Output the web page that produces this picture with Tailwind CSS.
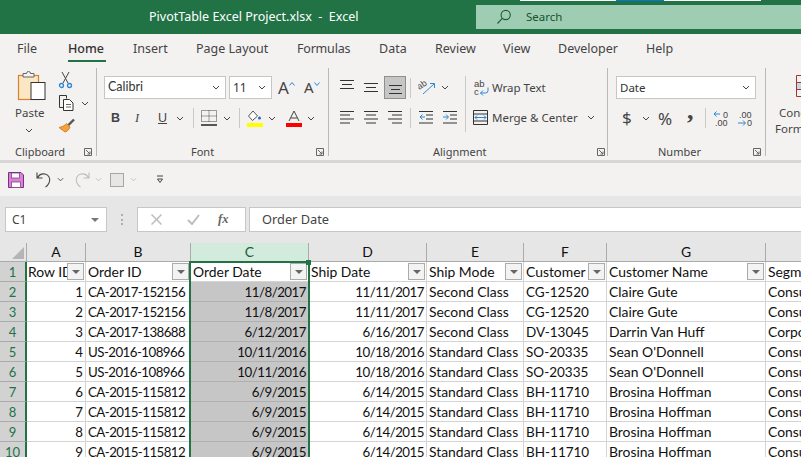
<!DOCTYPE html>
<html><head><meta charset="utf-8"><script src="https://cdn.jsdelivr.net/npm/@tailwindcss/browser@4"></script></head>
<body class="m-0">
<div class="relative w-[801px] h-[457px] overflow-hidden bg-[#e6e6e6] font-['Noto_Sans','Open_Sans',sans-serif] text-[#444]">

<!-- title bar -->
<header class="relative h-[34px] bg-[#217346] flex items-center">
  <div class="ml-[149px] w-[327px] text-[12.5px] text-white whitespace-pre">PivotTable Excel Project.xlsx  -  Excel</div>
  <div class="h-[24px] w-[325px] bg-[#9fcdb3] flex items-center text-[#14532d]">
    <svg class="ml-[20px]" width="16" height="16" viewBox="0 0 16 16" fill="none" stroke="#1d5c3a" stroke-width="1.1"><circle cx="9.7" cy="6" r="4.6"/><path d="M6.3 9.4 1.5 14.5"/></svg>
    <span class="ml-[14px] text-[11.5px]">Search</span>
  </div>
  <div class="absolute left-[520px] top-0 h-[1px] w-[96px] bg-white"></div>
  <div class="absolute left-[616px] top-0 h-[1px] w-[48px] bg-[#0078d4]"></div>
  <div class="absolute left-[664px] top-0 h-[1px] w-[97px] bg-white"></div>
</header>

<!-- tabs -->
<nav class="h-[28px] pt-[3px] bg-[#f3f2f1] flex items-center text-[12.5px] whitespace-nowrap text-[#444]">
  <span class="ml-[17px] w-[51px]">File</span>
  <span class="relative w-[65px] font-medium text-[#333]">Home<i class="absolute left-0 top-[20px] w-[38px] h-[2px] bg-[#217346]"></i></span>
  <span class="w-[63px]">Insert</span>
  <span class="w-[101px]">Page Layout</span>
  <span class="w-[82px] tracking-[-0.2px]">Formulas</span>
  <span class="w-[56px]">Data</span>
  <span class="w-[68px]">Review</span>
  <span class="w-[55px]">View</span>
  <span class="w-[88px]">Developer</span>
  <span>Help</span>
</nav>

<!-- ribbon -->
<section class="h-[98px] bg-[#f3f2f1] flex text-[#444] text-[11px] pt-[6px] pb-[4px] whitespace-nowrap">
  <!-- clipboard -->
  <div class="relative shrink-0 w-[97px] border-r border-[#b9b9b9] flex">
    <div class="w-[58px] pl-[15px] flex flex-col items-start">
      <svg class="ml-[2px] mt-[3px]" width="30" height="30" viewBox="0 0 30 30" fill="none"><rect x="1.5" y="4.5" width="20" height="24" fill="#fbe7c3" stroke="#d9812b" stroke-width="1.2"/><path d="M6 6V2.500h3.500a2 2 0 0 1 4 0H17V6z" fill="#f3f2f1" stroke="#666"/><rect x="14" y="11.500" width="14" height="17" fill="#fff" stroke="#333"/></svg>
      <span class="mt-[3px] text-[11.500px]">Paste</span>
      <svg class="ml-[10px] mt-[7px]" width="8" height="5" viewBox="0 0 8 5" fill="none" stroke="#444"><path d="m1 1 3 3 3-3"/></svg>
    </div>
    <div class="flex flex-col items-start pt-[3px]">
      <svg width="16" height="18" viewBox="0 0 16 18" fill="none" stroke="#444"><path d="M4 1l6 11M11 1 5 12"/><circle cx="3.500" cy="14.500" r="2" stroke="#2b88d8" stroke-width="1.3"/><circle cx="11.500" cy="14.500" r="2" stroke="#2b88d8" stroke-width="1.3"/></svg>
      <div class="flex items-center mt-[5px]">
        <svg width="18" height="18" viewBox="0 0 18 18" fill="none" stroke="#333"><path d="M1.500 1.500h7v3M1.500 1.500v12h4"/><path d="M5.500 5.500h6l3.500 3.500v7.500h-9.500z" fill="#fff"/><path d="M8 10.500h5M8 13h5" stroke="#666"/></svg>
        <svg class="ml-[5px]" width="8" height="5" viewBox="0 0 8 5" fill="none" stroke="#444"><path d="m1 1 3 3 3-3"/></svg>
      </div>
      <svg class="mt-[6px]" width="18" height="16" viewBox="0 0 18 16" fill="none"><path d="M1 9.500 7 14c3-1 4.500-3 5-5L8.500 5.500C7 7.500 4 9 1 9.500z" fill="#f3a33c" stroke="#d9812b"/><path d="m10.500 7 5.500-5.500" stroke="#555" stroke-width="2.400"/></svg>
    </div>
    <span class="absolute left-[15px] top-[76px]">Clipboard</span>
    <svg class="absolute left-[84px] top-[80px]" width="8" height="8" viewBox="0 0 8 8" fill="none" stroke="#666"><path d="M.5 7.500v-7h7v7zM2 2l4 4M6 3.500V6H3.500"/></svg>
  </div>

  <!-- font -->
  <div class="relative shrink-0 w-[232px] border-r border-[#b9b9b9] pl-[7px] pt-[8px]">
    <div class="flex items-center gap-[3px]">
      <div class="w-[122px] h-[23px] bg-white border border-[#c6c6c6] flex items-center justify-between px-[3px] text-[#333]"><span class="font-['Lato'] text-[12.500px]">Calibri</span><svg class="mr-[2px]" width="8" height="5" viewBox="0 0 8 5" fill="none" stroke="#444"><path d="m1 1 3 3 3-3"/></svg></div>
      <div class="w-[43px] h-[23px] bg-white border border-[#c6c6c6] flex items-center justify-between px-[3px] text-[#333]"><span class="text-[12px]">11</span><svg class="mr-[2px]" width="8" height="5" viewBox="0 0 8 5" fill="none" stroke="#444"><path d="m1 1 3 3 3-3"/></svg></div>
      <span class="ml-[3px] text-[17px] leading-none flex w-[22px]">A<svg class="mt-[3px]" width="6" height="4" viewBox="0 0 6 4" fill="none" stroke="#2b88d8"><path d="m.5 3.500 2.500-3 2.500 3"/></svg></span>
      <span class="ml-[1px] text-[15px] leading-none flex">A<svg class="mt-[2px]" width="6" height="4" viewBox="0 0 6 4" fill="none" stroke="#2b88d8"><path d="m.5.500 2.500 3 2.500-3"/></svg></span>
    </div>
    <div class="flex items-center mt-[7px] h-[24px] text-[#444]">
      <span class="ml-[7px] w-[24px] font-bold text-[12.500px] font-['Liberation_Sans']">B</span>
      <span class="w-[23px] italic text-[12.500px] font-['Liberation_Serif']">I</span>
      <span class="w-[18px] underline text-[12.500px] font-['Liberation_Sans']">U</span>
      <svg width="8" height="5" viewBox="0 0 8 5" fill="none" stroke="#444"><path d="m1 1 3 3 3-3"/></svg>
      <i class="ml-[9px] w-px h-[20px] bg-[#c9c9c9]"></i>
      <svg class="ml-[7px]" width="16" height="16" viewBox="0 0 16 16" fill="none"><path d="M.5.500h15v11H.500zM8 .500v11M.500 6h15" stroke="#444" stroke-dasharray="1 1"/><path d="M0 15h16" stroke="#222" stroke-width="1.500"/></svg>
      <svg class="ml-[6px]" width="8" height="5" viewBox="0 0 8 5" fill="none" stroke="#444"><path d="m1 1 3 3 3-3"/></svg>
      <i class="ml-[8px] w-px h-[20px] bg-[#c9c9c9]"></i>
      <svg class="ml-[7px]" width="16" height="17" viewBox="0 0 16 17" fill="none"><path d="M6 1 1.500 6l4 4.500L10.500 6z" fill="#fff" stroke="#555"/><circle cx="12.500" cy="8" r="1.500" fill="#1f6fb5"/><rect y="13" width="16" height="4" fill="#ff0"/></svg>
      <svg class="ml-[5px]" width="8" height="5" viewBox="0 0 8 5" fill="none" stroke="#444"><path d="m1 1 3 3 3-3"/></svg>
      <svg class="ml-[10px]" width="16" height="17" viewBox="0 0 16 17" fill="none"><path d="M3 11 8 1l5 10M4.800 8h6.400" stroke="#444"/><rect y="13" width="16" height="4" fill="#f00"/></svg>
      <svg class="ml-[5px]" width="8" height="5" viewBox="0 0 8 5" fill="none" stroke="#444"><path d="m1 1 3 3 3-3"/></svg>
    </div>
    <span class="absolute left-[94px] top-[76px]">Font</span>
    <svg class="absolute left-[219px] top-[80px]" width="8" height="8" viewBox="0 0 8 8" fill="none" stroke="#666"><path d="M.5 7.500v-7h7v7zM2 2l4 4M6 3.500V6H3.500"/></svg>
  </div>

  <!-- alignment -->
  <div class="relative shrink-0 w-[279px] border-r border-[#b9b9b9] flex">
    <div class="pl-[11px] pt-[8px] w-[136px] flex flex-col gap-[7px]">
      <div class="flex items-center h-[23px]">
        <svg width="15" height="23" viewBox="0 0 15 23" stroke="#333"><path d="M0 4.500h14M2 8.500h10M0 12.500h14"/></svg>
        <svg class="ml-[9px]" width="15" height="23" viewBox="0 0 15 23" stroke="#333"><path d="M0 7.500h14M2 11.500h10M0 15.500h14"/></svg>
        <div class="ml-[5px] w-[22px] h-[23px] bg-[#c6c6c6] border border-[#8f8f8f] flex items-center justify-center"><svg width="15" height="15" viewBox="0 0 15 15" stroke="#333"><path d="M1 5.500h13M3 9.500h9M1 13.500h13"/></svg></div>
        <i class="ml-[4px] w-px h-[20px] bg-[#c9c9c9]"></i>
        <svg class="ml-[7px]" width="18" height="18" viewBox="0 0 18 18" fill="none"><path d="m5 15 11-10M12 4.500h4.500V9" stroke="#2b88d8"/><text x="0" y="9" font-size="9" fill="#444" font-family="Liberation Sans" transform="rotate(-35 4 8)">ab</text></svg>
        <svg class="ml-[5px]" width="8" height="5" viewBox="0 0 8 5" fill="none" stroke="#444"><path d="m1 1 3 3 3-3"/></svg>
      </div>
      <div class="flex items-center h-[23px]">
        <svg width="15" height="15" viewBox="0 0 15 15" stroke="#333"><path d="M0 1.500h14M0 5h10M0 9h14M0 13h10"/></svg>
        <svg class="ml-[9px]" width="15" height="15" viewBox="0 0 15 15" stroke="#333"><path d="M0 1.500h14M2 5h10M0 9h14M2 13h10"/></svg>
        <svg class="ml-[9px]" width="15" height="15" viewBox="0 0 15 15" stroke="#333"><path d="M0 1.500h14M4 5h10M0 9h14M4 13h10"/></svg>
        <i class="ml-[7px] w-px h-[20px] bg-[#c9c9c9]"></i>
        <svg class="ml-[8px]" width="15" height="15" viewBox="0 0 15 15" fill="none"><path d="M0 1.500h14M7 5h7M7 9h7M0 13h14" stroke="#333"/><path d="M6 7H1M3.500 4.500 1 7l2.500 2.500" stroke="#2b88d8"/></svg>
        <svg class="ml-[9px]" width="15" height="15" viewBox="0 0 15 15" fill="none"><path d="M0 1.500h14M7 5h7M7 9h7M0 13h14" stroke="#333"/><path d="M0 7h5M3 4.500 5.500 7 3 9.500" stroke="#2b88d8"/></svg>
      </div>
    </div>
    <i class="mt-[8px] w-px h-[56px] bg-[#c9c9c9]"></i>
    <div class="pl-[8px] pt-[8px] flex flex-col gap-[7px] text-[11.500px]">
      <div class="flex items-center h-[23px]">
        <svg width="15" height="18" viewBox="0 0 15 18" fill="none"><text x="0" y="7.500" font-size="9.500" fill="#444" font-family="Liberation Sans">ab</text><text x="0" y="15.500" font-size="9.500" fill="#444" font-family="Liberation Sans">c</text><path d="M14 8.500v3a2.500 2.500 0 0 1-2.500 2.500H6.500M9 11.500 6.500 14 9 16.500" stroke="#2b88d8"/></svg>
        <span class="ml-[3px]">Wrap Text</span>
      </div>
      <div class="flex items-center h-[23px]">
        <svg class="mr-[4px] -ml-[1px]" width="15" height="15" viewBox="0 0 15 15" fill="none"><path d="M.5.500h14v14H.500z" stroke="#333"/><path d="M.500 4h14M.500 11h14" stroke="#333"/><path d="M2 7.500h11M4 5.500l-2 2 2 2M11 5.500l2 2-2 2" stroke="#2b88d8"/></svg>
        <span>Merge &amp; Center</span>
        <svg class="ml-[9px]" width="8" height="5" viewBox="0 0 8 5" fill="none" stroke="#444"><path d="m1 1 3 3 3-3"/></svg>
      </div>
    </div>
    <span class="absolute left-[104px] top-[76px]">Alignment</span>
    <svg class="absolute left-[268px] top-[80px]" width="8" height="8" viewBox="0 0 8 8" fill="none" stroke="#666"><path d="M.5 7.500v-7h7v7zM2 2l4 4M6 3.500V6H3.500"/></svg>
  </div>

  <!-- number -->
  <div class="relative shrink-0 w-[158px] border-r border-[#b9b9b9] pl-[8px] pt-[8px]">
    <div class="w-[140px] h-[23px] bg-white border border-[#c6c6c6] flex items-center justify-between px-[3px] text-[#333]"><span class="text-[11.500px]">Date</span><svg class="mr-[2px]" width="8" height="5" viewBox="0 0 8 5" fill="none" stroke="#444"><path d="m1 1 3 3 3-3"/></svg></div>
    <div class="flex items-center mt-[7px] h-[24px]">
      <span class="ml-[6px] w-[20px] text-[17px]">$</span>
      <svg width="8" height="5" viewBox="0 0 8 5" fill="none" stroke="#444"><path d="m1 1 3 3 3-3"/></svg>
      <span class="ml-[8px] w-[29px] text-[17px] leading-none">%</span>
      <span class="w-[18px] font-bold text-[26px] leading-none font-['Liberation_Serif'] -mt-[14px]">,</span>
      <i class="w-px h-[20px] bg-[#c9c9c9]"></i>
      <svg class="ml-[7px]" width="17" height="17" viewBox="0 0 17 17" fill="none"><path d="M7 4H1M3.500 1.500 1 4l2.500 2.500" stroke="#2b88d8"/><text x="10" y="7.500" font-size="9" fill="#444" font-family="Liberation Sans">0</text><text x="2" y="16" font-size="9" fill="#444" font-family="Liberation Sans">.00</text></svg>
      <svg class="ml-[7px]" width="17" height="17" viewBox="0 0 17 17" fill="none"><text x="2" y="7.500" font-size="9" fill="#444" font-family="Liberation Sans">.00</text><path d="M1 13h7M6 10.500 8.500 13 6 15.500" stroke="#2b88d8"/><text x="10" y="16" font-size="9" fill="#444" font-family="Liberation Sans">0</text></svg>
    </div>
    <span class="absolute left-[50px] top-[76px]">Number</span>
    <svg class="absolute left-[145px] top-[80px]" width="8" height="8" viewBox="0 0 8 8" fill="none" stroke="#666"><path d="M.5 7.500v-7h7v7zM2 2l4 4M6 3.500V6H3.500"/></svg>
  </div>

  <!-- styles, cut off -->
  <div class="pl-[9px] flex flex-col items-start leading-[16px] text-[11.500px]">
    <svg class="ml-[21px] mt-[7px]" width="12" height="22" viewBox="0 0 12 22" fill="none"><path d="M.5.500h12v21H.500z" stroke="#a4372a"/><path d="M.500 7.500h12M.500 14.500h12" stroke="#a4372a"/><rect x="1" y="8" width="11" height="6" fill="#bcd9f0"/></svg>
    <span class="mt-[8px] ml-[4px]">Cond</span>
    <span>Form</span>
  </div>
</section>

<!-- separator + quick access -->
<div class="h-[3px] bg-[#d6d6d6]"></div>
<div class="h-[33px] bg-[#f3f2f1] flex items-center">
  <svg class="ml-[8px]" width="16" height="16" viewBox="0 0 16 16"><path d="M.5.500h12.500l2.500 2.500v12.500H.500z" fill="#d883d4" stroke="#7a2f86"/><rect x="3.500" y="1" width="8" height="5" fill="#fff" stroke="#7a2f86" stroke-width=".7"/><rect x="3.500" y="10" width="9" height="5.500" fill="#fff" stroke="#7a2f86" stroke-width=".7"/></svg>
  <svg class="ml-[12px]" width="16" height="17" viewBox="0 0 16 17" fill="none" stroke="#444" stroke-width="1.100"><path d="M1 1.500v5.500h5.500M1.500 7C3 3.500 6 2.500 9 3c4 1 6 5 4 9-.7 1.500-2 3-3.500 4"/></svg>
  <svg class="ml-[5px]" width="7" height="5" viewBox="0 0 8 5" fill="none" stroke="#444"><path d="m1 1 3 3 3-3"/></svg>
  <svg class="ml-[10px]" width="16" height="17" viewBox="0 0 16 17" fill="none" stroke="#bdbdbd" stroke-width="1.100"><path d="M15 1.500v5.500H9.500M14.500 7C13 3.500 10 2.500 7 3c-4 1-6 5-4 9 .7 1.500 2 3 3.500 4"/></svg>
  <svg class="ml-[5px]" width="7" height="5" viewBox="0 0 8 5" fill="none" stroke="#bdbdbd"><path d="m1 1 3 3 3-3"/></svg>
  <div class="ml-[8px] w-[14px] h-[14px] bg-[#e6e6e6] border border-[#a6a6a6]"></div>
  <svg class="ml-[6px]" width="7" height="5" viewBox="0 0 8 5" fill="none" stroke="#bdbdbd"><path d="m1 1 3 3 3-3"/></svg>
  <svg class="ml-[19px]" width="8" height="9" viewBox="0 0 8 9" fill="none" stroke="#444"><path d="M1 1h6M1.500 4h5L4 7.500z"/></svg>
</div>

<!-- formula bar -->
<div class="h-[47px] flex items-center text-[#444]">
  <div class="ml-[5px] w-[102px] h-[25px] bg-white border border-[#c6c6c6] flex items-center justify-between px-[6px] text-[12px]"><span>C1</span><i class="mr-[1px] w-0 h-0 border-x-[4px] border-x-transparent border-t-[4px] border-t-[#777]"></i></div>
  <div class="ml-[14px] w-[2px] h-[11px] border-l-2 border-dotted border-[#b0b0b0]"></div>
  <div class="ml-[14px] w-[109px] h-[25px] bg-white border border-[#c6c6c6] flex items-center">
    <svg class="ml-[13px]" width="11" height="11" viewBox="0 0 11 11" stroke="#bdbdbd" stroke-width="1.500"><path d="m.5.500 10 10M10.500.500l-10 10"/></svg>
    <svg class="ml-[25px]" width="13" height="11" viewBox="0 0 13 11" fill="none" stroke="#bdbdbd" stroke-width="2"><path d="m1 6 4 4 7-9"/></svg>
    <span class="ml-[18px] font-['Liberation_Serif'] italic font-bold text-[12.500px] text-[#666]">fx</span>
  </div>
  <div class="ml-[3px] flex-1 h-[25px] bg-white border-y border-l border-[#c6c6c6] flex items-center pl-[12px] text-[12.800px] text-[#444]">Order Date</div>
</div>

<!-- sheet -->
<div class="relative font-['Lato',sans-serif] text-[13.900px] text-[#111] grid grid-cols-[27px_59px_105px_118px_118px_97px_83px_159px_60px] grid-rows-[19px_repeat(10,20px)] whitespace-nowrap [&>div]:overflow-hidden [&>div]:border-r [&>div]:border-b [&>div]:border-[#d4d4d4] [&>div]:px-[2px] [&>div]:leading-[20px]">
  <!-- header -->
  <div class="relative !border-[#ababab] bg-[#e6e6e6]"><i class="absolute right-[2px] bottom-[2px] w-0 h-0 border-l-[12px] border-l-transparent border-b-[12px] border-b-[#b5b5b5]"></i></div>
  <div class="!border-[#ababab] bg-[#e6e6e6] text-center !leading-[17px]">A</div>
  <div class="!border-[#ababab] bg-[#e6e6e6] text-center !leading-[17px]">B</div>
  <div class="!border-[#ababab] bg-[#d2ebdd] text-center text-[#1d5c3a] !leading-[17px]">C</div>
  <div class="!border-[#ababab] bg-[#e6e6e6] text-center !leading-[17px]">D</div>
  <div class="!border-[#ababab] bg-[#e6e6e6] text-center !leading-[17px]">E</div>
  <div class="!border-[#ababab] bg-[#e6e6e6] text-center !leading-[17px]">F</div>
  <div class="!border-[#ababab] bg-[#e6e6e6] text-center !leading-[17px]">G</div>
  <div class="!border-[#ababab] bg-[#e6e6e6]"></div>

  <!-- row 1 -->
  <div class="!border-[#ababab] !border-r-2 !border-r-[#217346] bg-[#d2d2d2] text-center text-[#217346] !text-[13px]">1</div>
  <div class="relative bg-white !pl-[1px]">Row ID<i class="absolute right-[1px] top-[1px] w-[17px] h-[17px] bg-[#f3f3f3] border border-[#ababab] flex items-center justify-center"><b class="w-0 h-0 border-x-[4px] border-x-transparent border-t-[4px] border-t-[#666]"></b></i></div>
  <div class="relative bg-white">Order ID<i class="absolute right-[1px] top-[1px] w-[17px] h-[17px] bg-[#f3f3f3] border border-[#ababab] flex items-center justify-center"><b class="w-0 h-0 border-x-[4px] border-x-transparent border-t-[4px] border-t-[#666]"></b></i></div>
  <div class="relative bg-white">Order Date<i class="absolute right-[1px] top-[1px] w-[17px] h-[17px] bg-[#f3f3f3] border border-[#ababab] flex items-center justify-center"><b class="w-0 h-0 border-x-[4px] border-x-transparent border-t-[4px] border-t-[#666]"></b></i></div>
  <div class="relative bg-white">Ship Date<i class="absolute right-[1px] top-[1px] w-[17px] h-[17px] bg-[#f3f3f3] border border-[#ababab] flex items-center justify-center"><b class="w-0 h-0 border-x-[4px] border-x-transparent border-t-[4px] border-t-[#666]"></b></i></div>
  <div class="relative bg-white">Ship Mode<i class="absolute right-[1px] top-[1px] w-[17px] h-[17px] bg-[#f3f3f3] border border-[#ababab] flex items-center justify-center"><b class="w-0 h-0 border-x-[4px] border-x-transparent border-t-[4px] border-t-[#666]"></b></i></div>
  <div class="relative bg-white">Customer<i class="absolute right-[1px] top-[1px] w-[17px] h-[17px] bg-[#f3f3f3] border border-[#ababab] flex items-center justify-center"><b class="w-0 h-0 border-x-[4px] border-x-transparent border-t-[4px] border-t-[#666]"></b></i></div>
  <div class="relative bg-white">Customer Name<i class="absolute right-[1px] top-[1px] w-[17px] h-[17px] bg-[#f3f3f3] border border-[#ababab] flex items-center justify-center"><b class="w-0 h-0 border-x-[4px] border-x-transparent border-t-[4px] border-t-[#666]"></b></i></div>
  <div class="bg-white">Segment</div>

  <!-- 2 -->
  <div class="!border-[#ababab] !border-r-2 !border-r-[#217346] bg-[#d2d2d2] text-center text-[#217346] !text-[13px]">2</div><div class="bg-white text-right text-[13.300px]">1</div><div class="bg-white text-[13.300px] tracking-[-0.55px]">CA-2017-152156</div><div class="bg-[#c6c6c6] text-right !border-[#b0b0b0] text-[13.300px] tracking-[-0.5px]">11/8/2017</div><div class="bg-white text-right text-[13.300px] tracking-[-0.5px]">11/11/2017</div><div class="bg-white">Second Class</div><div class="bg-white text-[13.500px]">CG-12520</div><div class="bg-white">Claire Gute</div><div class="bg-white">Consumer</div>
  <!-- 3 -->
  <div class="!border-[#ababab] !border-r-2 !border-r-[#217346] bg-[#d2d2d2] text-center text-[#217346] !text-[13px]">3</div><div class="bg-white text-right text-[13.300px]">2</div><div class="bg-white text-[13.300px] tracking-[-0.55px]">CA-2017-152156</div><div class="bg-[#c6c6c6] text-right !border-[#b0b0b0] text-[13.300px] tracking-[-0.5px]">11/8/2017</div><div class="bg-white text-right text-[13.300px] tracking-[-0.5px]">11/11/2017</div><div class="bg-white">Second Class</div><div class="bg-white text-[13.500px]">CG-12520</div><div class="bg-white">Claire Gute</div><div class="bg-white">Consumer</div>
  <!-- 4 -->
  <div class="!border-[#ababab] !border-r-2 !border-r-[#217346] bg-[#d2d2d2] text-center text-[#217346] !text-[13px]">4</div><div class="bg-white text-right text-[13.300px]">3</div><div class="bg-white text-[13.300px] tracking-[-0.55px]">CA-2017-138688</div><div class="bg-[#c6c6c6] text-right !border-[#b0b0b0] text-[13.300px] tracking-[-0.5px]">6/12/2017</div><div class="bg-white text-right text-[13.300px] tracking-[-0.5px]">6/16/2017</div><div class="bg-white">Second Class</div><div class="bg-white text-[13.500px]">DV-13045</div><div class="bg-white">Darrin Van Huff</div><div class="bg-white">Corporate</div>
  <!-- 5 -->
  <div class="!border-[#ababab] !border-r-2 !border-r-[#217346] bg-[#d2d2d2] text-center text-[#217346] !text-[13px]">5</div><div class="bg-white text-right text-[13.300px]">4</div><div class="bg-white text-[13.300px] tracking-[-0.55px]">US-2016-108966</div><div class="bg-[#c6c6c6] text-right !border-[#b0b0b0] text-[13.300px] tracking-[-0.5px]">10/11/2016</div><div class="bg-white text-right text-[13.300px] tracking-[-0.5px]">10/18/2016</div><div class="bg-white">Standard Class</div><div class="bg-white text-[13.500px]">SO-20335</div><div class="bg-white">Sean O'Donnell</div><div class="bg-white">Consumer</div>
  <!-- 6 -->
  <div class="!border-[#ababab] !border-r-2 !border-r-[#217346] bg-[#d2d2d2] text-center text-[#217346] !text-[13px]">6</div><div class="bg-white text-right text-[13.300px]">5</div><div class="bg-white text-[13.300px] tracking-[-0.55px]">US-2016-108966</div><div class="bg-[#c6c6c6] text-right !border-[#b0b0b0] text-[13.300px] tracking-[-0.5px]">10/11/2016</div><div class="bg-white text-right text-[13.300px] tracking-[-0.5px]">10/18/2016</div><div class="bg-white">Standard Class</div><div class="bg-white text-[13.500px]">SO-20335</div><div class="bg-white">Sean O'Donnell</div><div class="bg-white">Consumer</div>
  <!-- 7 -->
  <div class="!border-[#ababab] !border-r-2 !border-r-[#217346] bg-[#d2d2d2] text-center text-[#217346] !text-[13px]">7</div><div class="bg-white text-right text-[13.300px]">6</div><div class="bg-white text-[13.300px] tracking-[-0.55px]">CA-2015-115812</div><div class="bg-[#c6c6c6] text-right !border-[#b0b0b0] text-[13.300px] tracking-[-0.5px]">6/9/2015</div><div class="bg-white text-right text-[13.300px] tracking-[-0.5px]">6/14/2015</div><div class="bg-white">Standard Class</div><div class="bg-white text-[13.500px]">BH-11710</div><div class="bg-white">Brosina Hoffman</div><div class="bg-white">Consumer</div>
  <!-- 8 -->
  <div class="!border-[#ababab] !border-r-2 !border-r-[#217346] bg-[#d2d2d2] text-center text-[#217346] !text-[13px]">8</div><div class="bg-white text-right text-[13.300px]">7</div><div class="bg-white text-[13.300px] tracking-[-0.55px]">CA-2015-115812</div><div class="bg-[#c6c6c6] text-right !border-[#b0b0b0] text-[13.300px] tracking-[-0.5px]">6/9/2015</div><div class="bg-white text-right text-[13.300px] tracking-[-0.5px]">6/14/2015</div><div class="bg-white">Standard Class</div><div class="bg-white text-[13.500px]">BH-11710</div><div class="bg-white">Brosina Hoffman</div><div class="bg-white">Consumer</div>
  <!-- 9 -->
  <div class="!border-[#ababab] !border-r-2 !border-r-[#217346] bg-[#d2d2d2] text-center text-[#217346] !text-[13px]">9</div><div class="bg-white text-right text-[13.300px]">8</div><div class="bg-white text-[13.300px] tracking-[-0.55px]">CA-2015-115812</div><div class="bg-[#c6c6c6] text-right !border-[#b0b0b0] text-[13.300px] tracking-[-0.5px]">6/9/2015</div><div class="bg-white text-right text-[13.300px] tracking-[-0.5px]">6/14/2015</div><div class="bg-white">Standard Class</div><div class="bg-white text-[13.500px]">BH-11710</div><div class="bg-white">Brosina Hoffman</div><div class="bg-white">Consumer</div>
  <!-- 10 -->
  <div class="!border-[#ababab] !border-r-2 !border-r-[#217346] bg-[#d2d2d2] text-center text-[#217346] !text-[13px]">10</div><div class="bg-white text-right text-[13.300px]">9</div><div class="bg-white text-[13.300px] tracking-[-0.55px]">CA-2015-115812</div><div class="bg-[#c6c6c6] text-right !border-[#b0b0b0] text-[13.300px] tracking-[-0.5px]">6/9/2015</div><div class="bg-white text-right text-[13.300px] tracking-[-0.5px]">6/14/2015</div><div class="bg-white">Standard Class</div><div class="bg-white text-[13.500px]">BH-11710</div><div class="bg-white">Brosina Hoffman</div><div class="bg-white">Consumer</div>

  <!-- selected column outline -->
  <span class="absolute left-[189px] top-[18px] w-[121px] h-[230px] border-2 border-[#217346] pointer-events-none"></span>
  <span class="absolute left-[306px] top-[17px] w-[5px] h-[5px] bg-[#217346] pointer-events-none"></span>
</div>
</div>
</body></html>
